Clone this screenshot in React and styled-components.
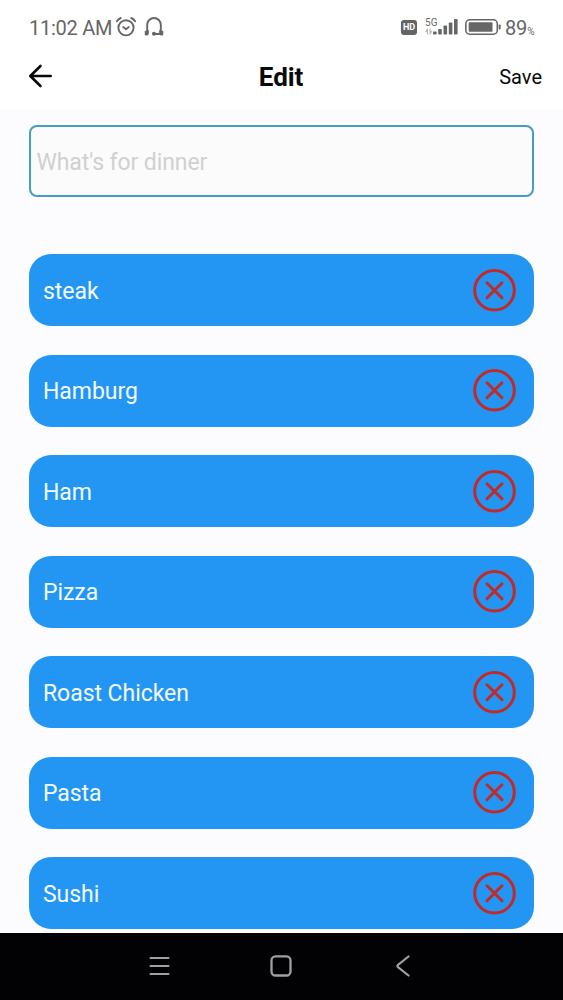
import React, { useState } from 'react';
import styled, { createGlobalStyle } from 'styled-components';

const GlobalStyle = createGlobalStyle`
* {
  box-sizing: border-box;
}
body {
  margin: 0;
  background: #fcfbfe;
  font-family: Roboto, "Liberation Sans", sans-serif;
}
`
const Screen = styled.div`
display: flex;
flex-direction: column;
width: 563px;
height: 1000px;
overflow: hidden;
background: #fcfbfe;
`
const StatusBar = styled.div`
display: flex;
align-items: center;
flex: none;
height: 54px;
padding: 0 29px 0 29px;
background: #fff;
color: #666;
`
const Clock = styled.span`
width: 87px;
padding-top: 2px;
font-size: 20px;
line-height: 24px;
letter-spacing: -0.25px;
white-space: nowrap;
`
const StatusIcons = styled.div`
display: flex;
align-items: center;
margin-left: auto;
`
const HdBadge = styled.span`
width: 16px;
height: 15px;
margin-right: 8px;
border-radius: 3px;
background: #646464;
color: #fff;
font-size: 9px;
font-weight: 700;
line-height: 15.5px;
text-align: center;
`
const Network = styled.div`
display: flex;
flex-direction: column;
width: 8px;
height: 20px;
font-size: 10px;
line-height: 11px;
white-space: nowrap;
`
const Battery = styled.span`
display: flex;
align-items: baseline;
margin-left: 3px;
padding-top: 2px;
font-size: 20px;
line-height: 24px;
letter-spacing: -0.2px;
`
const Percent = styled.span`
font-size: 10px;
line-height: 12px;
letter-spacing: -0.5px;
`
const Header = styled.header`
display: grid;
grid-template-columns: 1fr auto 1fr;
align-items: center;
flex: none;
height: 55px;
padding: 0 21px 9px 28px;
background: #fff;
color: #0a0a0a;
`
const Title = styled.h1`
margin: 0 0 0 -8px;
font-size: 26px;
font-weight: 700;
line-height: 30px;
letter-spacing: -0.1px;
`
const HeaderButton = styled.button`
display: flex;
justify-self: ${props => props.$end ? 'end' : 'start'};
margin-top: ${props => props.$end ? '0' : '-2px'};
padding: 0;
border: none;
background: none;
color: inherit;
font: 20px/24px Roboto, "Liberation Sans", sans-serif;
`
const Content = styled.main`
flex: 1;
min-height: 0;
overflow: hidden;
padding: 16px 29px 0 28.5px;
`
const Input = styled.input`
display: block;
width: 100%;
height: 72px;
padding: 2px 6px 0;
border: 2px solid #459ebd;
border-radius: 8px;
background: #fbfbfc;
outline: none;
color: #222;
font: 23px/28px Roboto, "Liberation Sans", sans-serif;
letter-spacing: -0.1px;
&::placeholder {
  color: #d0d0d0;
  opacity: 1;
}
`
const List = styled.ul`
display: flex;
flex-direction: column;
gap: 28.5px;
margin: 57px 0 0;
padding: 0;
list-style: none;
`
const Item = styled.li`
display: flex;
align-items: center;
justify-content: space-between;
flex: none;
height: 72px;
padding: 0 18px 0 14.5px;
border-radius: 22px;
background: #2396f3;
color: #f4faff;
font-size: 23px;
line-height: 28px;
letter-spacing: -0.05px;
`
const Name = styled.span`
padding-top: 3px;
`
const DeleteButton = styled.button`
display: flex;
padding: 0;
border: none;
background: none;
`
const NavBar = styled.nav`
display: flex;
justify-content: space-between;
align-items: center;
flex: none;
height: 67px;
padding: 0 152px 1px 149px;
background: #020104;
`

const AlarmIcon = () => (
  <svg width="20" height="20" viewBox="0 0 20 20" fill="none" stroke="#666" strokeWidth="1.9" strokeLinecap="round" strokeLinejoin="round">
    <circle cx="10" cy="10.8" r="7.6" />
    <path d="M7.2 10L10 12.2L12.8 10" />
    <path d="M0.9 4.2Q2.3 2 4.7 1M19.1 4.2Q17.7 2 15.3 1" />
  </svg>
)

const HeadphonesIcon = () => (
  <svg width="20" height="20" viewBox="0 0 20 20" fill="none" stroke="#666" strokeWidth="1.9" strokeLinecap="round" style={{ marginLeft: 7.5 }}>
    <path d="M3.2 15V7.8a6.8 6.8 0 0 1 13.6 0V15" />
    <path d="M1.7 14.8v2.5q2.2.8 2.2-1v-2zM18.3 14.8v2.5q-2.2.8-2.2-1v-2z" fill="#666" />
    <path d="M16 17H10.5" />
    <circle cx="10" cy="16.7" r="1.1" fill="#666" />
  </svg>
)

const SignalIcon = () => (
  <svg width="26" height="18" viewBox="0 0 26 18" fill="#666">
    <rect x="0" y="13.5" width="3.6" height="3" rx="0.8" />
    <rect x="5.2" y="11" width="3.6" height="5.5" rx="0.8" />
    <rect x="10.5" y="7.5" width="3.6" height="9" rx="0.8" />
    <rect x="15.8" y="4.5" width="3.6" height="12" rx="0.8" />
    <rect x="21" y="1" width="3.6" height="15.5" rx="0.8" />
  </svg>
)

const DataIcon = () => (
  <svg width="8" height="7" viewBox="0 0 8 7" fill="none" stroke="#b5b5b5" strokeWidth="1">
    <path d="M2.5 6.5V.8L.6 3.8h1.9M5 .5v5.7l2-3H5" />
  </svg>
)

const BatteryIcon = () => (
  <svg width="37" height="18" viewBox="0 0 37 18" fill="none" style={{ marginLeft: 6 }}>
    <rect x="0.8" y="1.8" width="31.5" height="14.4" rx="4" stroke="#666" strokeWidth="1.6" />
    <rect x="3.7" y="4.2" width="23.8" height="9.6" rx="0.8" fill="#666" />
    <rect x="33.7" y="6.5" width="1.9" height="5" rx="0.8" fill="#666" />
  </svg>
)

const BackIcon = () => (
  <svg width="25" height="24" viewBox="0 0 25 24" fill="none" stroke="#0a0a0a" strokeWidth="2.6" strokeLinecap="round" strokeLinejoin="round">
    <path d="M12.5 2L2.3 12L12.5 22M2.3 12H22.7" />
  </svg>
)

const DeleteIcon = () => (
  <svg width="43" height="43" viewBox="0 0 43 43" fill="none" stroke="#c32926" strokeWidth="3" strokeLinecap="round">
    <circle cx="21.5" cy="21.3" r="19.8" />
    <path d="M14 13.8L29 28.8M29 13.8L14 28.8" />
  </svg>
)

export default function App() {
  const [dinner, setDinner] = useState('')
  const [foods, setFoods] = useState(['steak', 'Hamburg', 'Ham', 'Pizza', 'Roast Chicken', 'Pasta', 'Sushi'])

  function removeFood(food) {
    setFoods(foods.filter(item => item !== food))
  }

  return (
    <Screen>
      <GlobalStyle />
      <StatusBar>
        <Clock>11:02 AM</Clock>
        <AlarmIcon />
        <HeadphonesIcon />
        <StatusIcons>
          <HdBadge>HD</HdBadge>
          <Network>
            5G
            <DataIcon />
          </Network>
          <SignalIcon />
          <BatteryIcon />
          <Battery>89<Percent>%</Percent></Battery>
        </StatusIcons>
      </StatusBar>
      <Header>
        <HeaderButton aria-label="Back"><BackIcon /></HeaderButton>
        <Title>Edit</Title>
        <HeaderButton $end>Save</HeaderButton>
      </Header>
      <Content>
        <Input
          type="text"
          placeholder="What's for dinner"
          value={dinner}
          onChange={e => setDinner(e.target.value)}
        />
        <List>
          {foods.map(food => (
            <Item key={food}>
              <Name>{food}</Name>
              <DeleteButton aria-label="Delete" onClick={() => removeFood(food)}>
                <DeleteIcon />
              </DeleteButton>
            </Item>
          ))}
        </List>
      </Content>
      <NavBar>
        <svg width="21" height="22" viewBox="0 0 21 22" stroke="#a0a0a0" strokeWidth="2.2" strokeLinecap="round">
          <path d="M1.5 3h18M1.5 11h18M1.5 19h18" />
        </svg>
        <svg width="22" height="22" viewBox="0 0 22 22" fill="none" stroke="#a0a0a0" strokeWidth="2.3" style={{ marginRight: 4 }}>
          <rect x="1.5" y="1.3" width="19" height="19.2" rx="4" />
        </svg>
        <svg width="16" height="22" viewBox="0 0 16 22" fill="none" stroke="#a0a0a0" strokeWidth="2.2" strokeLinecap="round" strokeLinejoin="round">
          <path d="M13.5 1.5L3 9.8Q1.8 11 3 12.2L13.5 20.5" />
        </svg>
      </NavBar>
    </Screen>
  )
}
